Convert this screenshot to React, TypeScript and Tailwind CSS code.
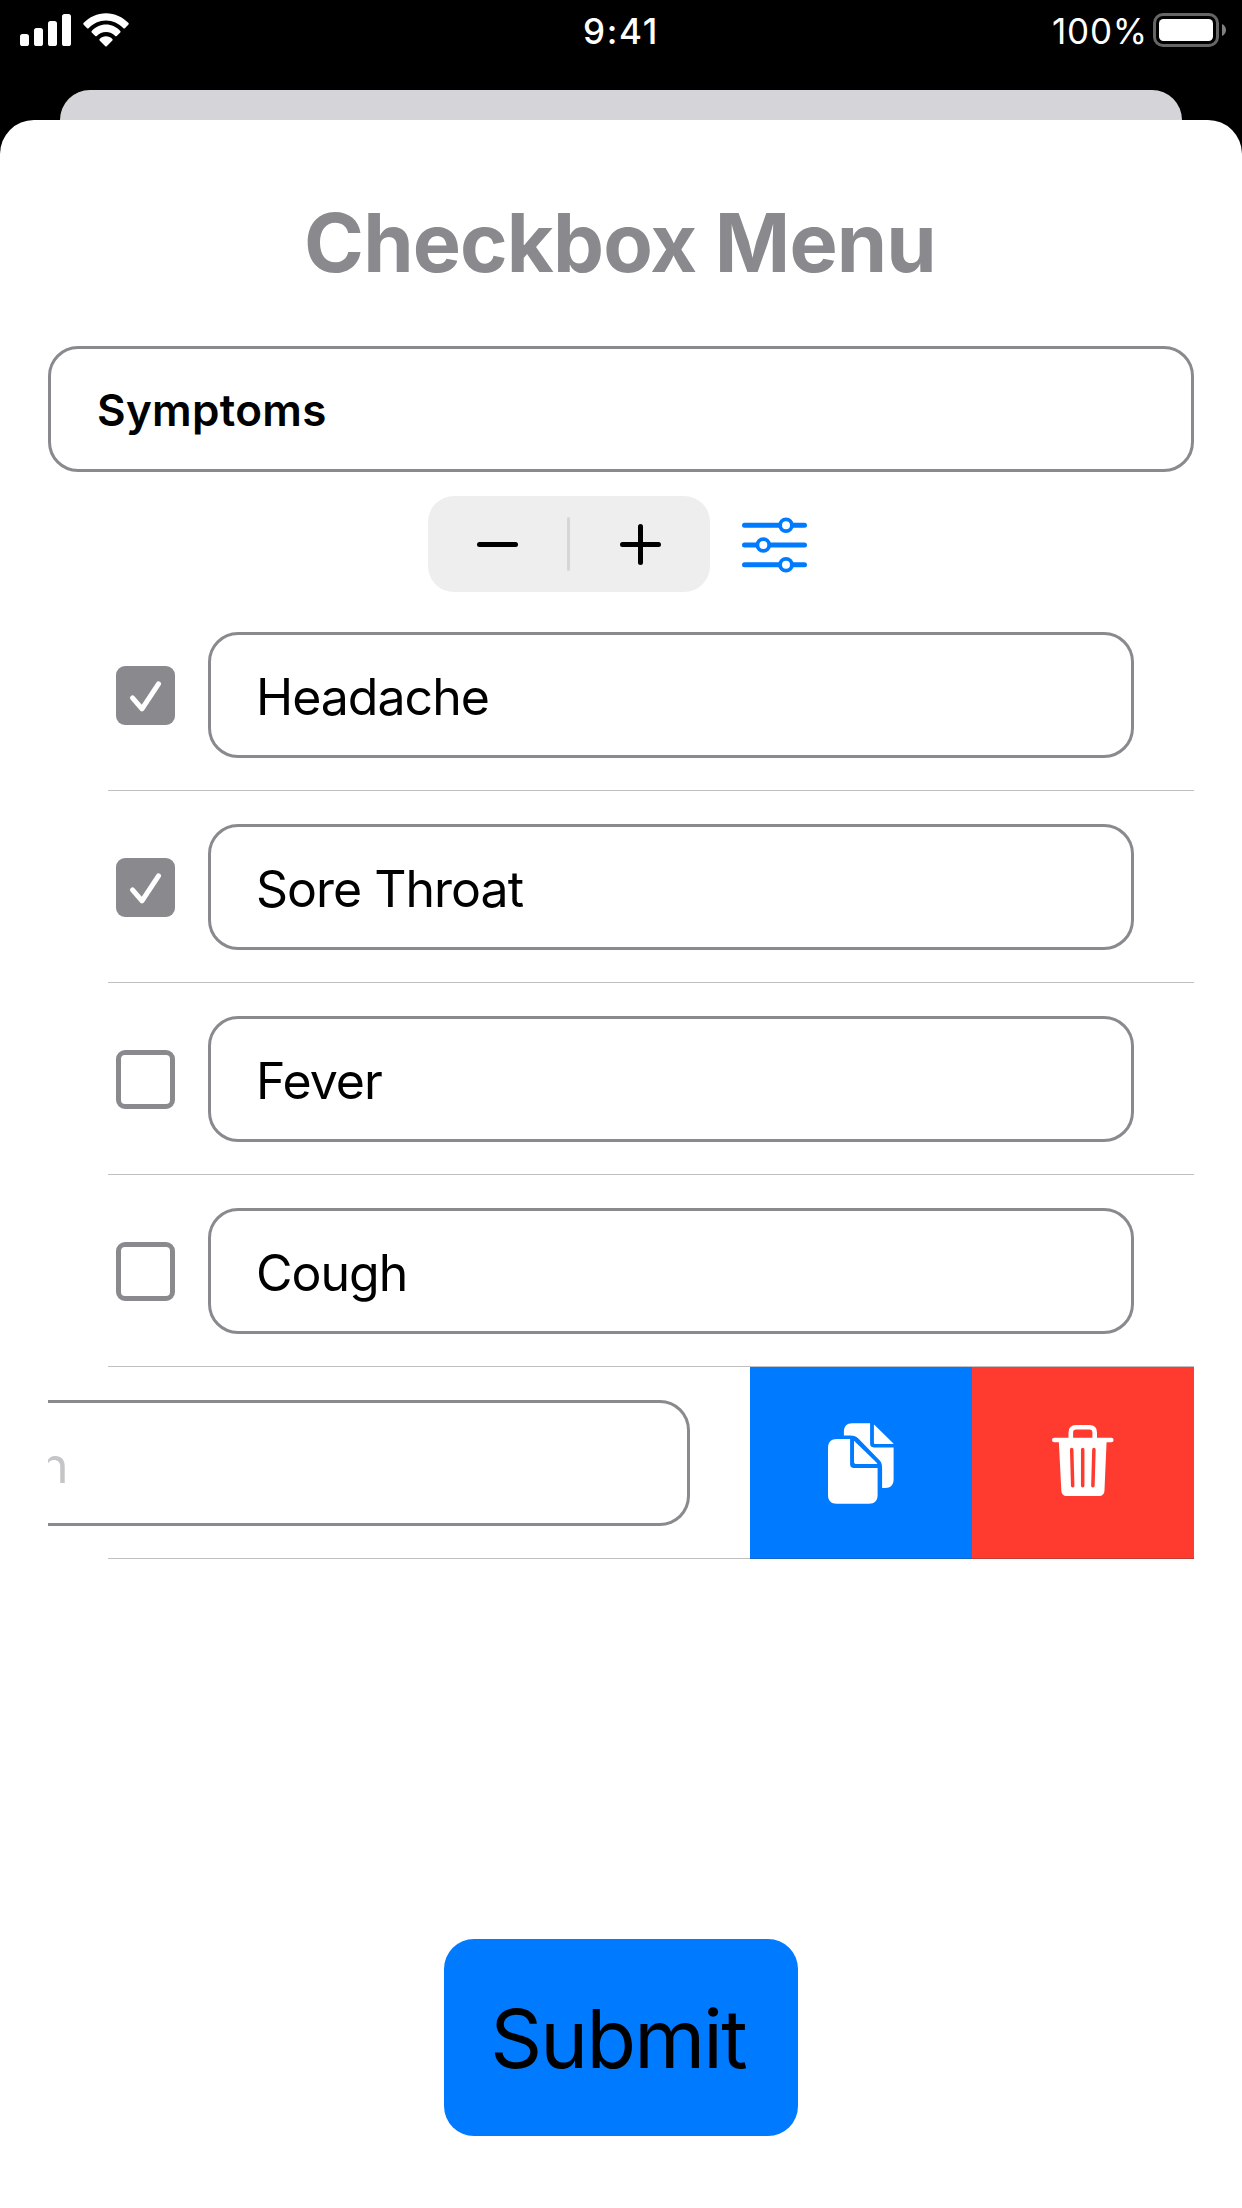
import type { ReactNode } from 'react';

function SignalIcon() {
  return (
    <svg width="51" height="32" viewBox="0 0 51 32" fill="#fff">
      <rect x="0" y="20" width="9" height="12" rx="2.6" />
      <rect x="14" y="14" width="9" height="18" rx="2.6" />
      <rect x="28" y="7" width="9" height="25" rx="2.6" />
      <rect x="42" y="0" width="9" height="32" rx="2.6" />
    </svg>
  );
}

function WifiIcon() {
  return (
    <svg width="46" height="34" viewBox="0 0 46 34" fill="#fff">
      <path d="M.5 10.1C6.300 4 14.300.2 23 .2s16.700 3.800 22.500 9.900c.4.5.4 1.100 0 1.500l-3.600 3.600c-.4.4-1 .4-1.500 0C35.800 10.500 29.700 7.500 23 7.500S10.200 10.500 5.600 15.200c-.5.4-1.100.4-1.500 0L.5 11.600c-.4-.4-.4-1 0-1.500Z" />
      <path d="M8.700 18C12.400 14 17.400 11.500 23 11.500S33.600 14 37.300 18c.4.4.4 1 0 1.400l-3.600 3.600c-.4.4-1 .4-1.500 0-2.400-2.500-5.600-4-9.200-4s-6.800 1.500-9.200 4c-.5.4-1.100.4-1.500 0l-3.600-3.600c-.4-.4-.4-1 0-1.400Z" />
      <path d="M16.600 26c1.700-1.800 4-2.800 6.400-2.800s4.700 1 6.400 2.800c.4.5.4 1 0 1.500l-5.700 5.700c-.4.4-1 .4-1.400 0l-5.700-5.700c-.4-.5-.4-1 0-1.500Z" />
    </svg>
  );
}

function BatteryIcon() {
  return (
    <svg width="74" height="34" viewBox="0 0 74 34">
      <rect x="1.500" y="1.500" width="63" height="31" rx="8.500" fill="none" stroke="#666" strokeWidth="3" />
      <rect x="6" y="6" width="54" height="22" rx="4.500" fill="#fff" />
      <path d="M69 11c2.500 1 4 3.400 4 6s-1.500 5-4 6Z" fill="#808080" />
    </svg>
  );
}

function SlidersIcon() {
  return (
    <svg className="relative top-[0.5px]" width="65" height="56" viewBox="0 0 65 56" fill="none" stroke="#007aff" strokeLinecap="round">
      <path d="M2.500 8.300h60M2.500 28h60M2.500 47.700h60" strokeWidth="5" />
      <g fill="#fff" strokeWidth="3.800">
        <circle cx="44" cy="8.300" r="5.900" />
        <circle cx="21.300" cy="28" r="5.900" />
        <circle cx="44" cy="47.700" r="5.900" />
      </g>
    </svg>
  );
}

function CopyIcon() {
  return (
    <svg width="66" height="81" viewBox="0 0 66 81" fill="#fff">
      <path d="M9 16h13.100v25.200c0 2.600 1.400 3.800 3.900 3.800h23.600v27c0 5.800-3 8.700-8.700 8.700H8.700C3 80.700 0 77.800 0 72V24.800C0 19 3 16 9 16Z" />
      <path d="M26 17.700 49 40.100c.4.400.3.800-.3.800H27.800c-1.200 0-1.800-.6-1.800-1.800Z" />
      <path d="M24.300.3h17.800v20.300c0 2.600 1.300 3.800 3.900 3.800h19.600v31.900c0 5.800-3 8.700-8.300 8.700h-3.200V45.500c0-4.600-.6-6.200-3.600-9.300L30.800 16c-2.700-2.800-4.600-3.500-8.500-3.500h-6.400V9c0-5.700 2.800-8.700 8.400-8.700Z" />
      <path d="m46.300 1.800 18.900 18.400c.4.400.3.900-.3.900H47.200c-.8 0-1.300-.5-1.300-1.300V2c0-.4.200-.4.400-.2Z" />
    </svg>
  );
}

function TrashIcon() {
  return (
    <svg width="62" height="72" viewBox="0 0 62 72" fill="none">
      <path d="M18.800 14V7.500c0-3.400 1.900-5.200 5.300-5.200h13.400c3.400 0 5.200 1.800 5.200 5.200V14" stroke="#fff" strokeWidth="4.600" />
      <path d="M2.300 15h57" stroke="#fff" strokeWidth="4.600" strokeLinecap="round" />
      <path d="M6.800 16h47.800l-2.100 49c-.2 4-2 6-6 6H15.300c-4 0-5.800-2-6-6Z" fill="#fff" />
      <path d="m19.700 24.600 1 36.200M30.700 24.600v36.200M41.900 24.600l-1 36.200" stroke="#ff3b30" strokeWidth="3.500" strokeLinecap="round" />
    </svg>
  );
}

function Checkbox({ checked }: { checked: boolean }) {
  return checked ? (
    <span className="flex size-[59px] items-center justify-center rounded-[9px] bg-[#8a8a8e]">
      <svg width="59" height="59" viewBox="0 0 59 59" fill="none" stroke="#fff" strokeWidth="5" strokeLinecap="round" strokeLinejoin="round">
        <path d="m16.500 31.800 9.500 11L42.500 17.800" />
      </svg>
    </span>
  ) : (
    <span className="size-[59px] rounded-[9px] border-5 border-[#8a8a8e]" />
  );
}

function Row({ children }: { children: ReactNode }) {
  return (
    <li className="relative flex h-48 items-center overflow-hidden">
      {children}
      <span className="absolute right-0 bottom-0 left-15 h-px bg-[rgba(60,60,67,0.32)]" />
    </li>
  );
}

const options = [
  { label: 'Headache', checked: true },
  { label: 'Sore Throat', checked: true },
  { label: 'Fever', checked: false },
  { label: 'Cough', checked: false },
];

export default function App() {
  return (
    <div className="flex h-[2208px] w-[1242px] flex-col bg-black font-['Inter',sans-serif] text-black">
      <header className="grid h-[90px] grid-cols-3 items-start text-[35px] leading-[62px] text-white">
        <div className="flex items-start gap-3 pt-[13px] pl-5">
          <span className="pt-px"><SignalIcon /></span>
          <WifiIcon />
        </div>
        <div className="text-center font-medium tracking-[1.7px]">9:41</div>
        <div className="flex justify-end gap-[5px] pr-[15px]">
          <span className="tracking-[0.8px]">100%</span>
          <span className="pt-[13px]"><BatteryIcon /></span>
        </div>
      </header>

      <div className="mx-15 h-[30px] rounded-t-[30px] bg-[#d5d4d9]" />

      <main className="flex flex-1 flex-col rounded-t-[34px] bg-white px-12 pb-[72px]">
        <h1 className="h-[226px] pt-5 pr-[2px] text-center text-[81px] leading-[207px] font-bold tracking-[-0.87px] text-[#8a8a8e]">
          Checkbox Menu
        </h1>

        <div className="flex h-[126px] items-center rounded-[30px] border-3 border-[#8a8a8e] px-[46px] pt-0.5 text-[44px] font-semibold tracking-[0.3px]">
          Symptoms
        </div>

        <div className="mt-6 flex h-24 items-center gap-8 pl-[380px]">
          <div className="flex h-24 w-[282px] items-center rounded-[26px] bg-[#eeeeee]">
            <div className="flex w-[139px] justify-center">
              <span className="h-[5px] w-[41px] rounded-full bg-black" />
            </div>
            <span className="h-[54px] w-[3px] rounded-full bg-[#d6d6d6]" />
            <div className="flex flex-1 justify-center pl-px">
              <svg width="41" height="41" viewBox="0 0 41 41" stroke="#000" strokeWidth="5" strokeLinecap="round">
                <path d="M2.500 20.500h36M20.500 2.500v36" />
              </svg>
            </div>
          </div>
          <SlidersIcon />
        </div>

        <ul className="mt-[7px]">
          {options.map((option) => (
            <Row key={option.label}>
              <div className="flex flex-1 items-center pr-15 pl-[68px]">
                <Checkbox checked={option.checked} />
                <div className="ml-[33px] flex h-[126px] flex-1 items-center rounded-[30px] border-3 border-[#8a8a8e] pt-[5px] pl-[45px] text-[50px] tracking-[-1px]">
                  {option.label}
                </div>
              </div>
            </Row>
          ))}
          <Row>
            <div className="flex h-[126px] w-[642px] shrink-0 items-center rounded-r-[30px] border-3 border-l-0 border-[#8a8a8e] pt-[5px] text-[50px] text-[#c5c5c7]">
              <span className="-ml-[9px]">n</span>
            </div>
            <div className="ml-15 flex h-full flex-1">
              <button className="flex w-[222px] items-center justify-center bg-[#007aff] pt-px">
                <CopyIcon />
              </button>
              <button className="flex w-[222px] items-center justify-center bg-[#ff3b30] pb-[5px]">
                <TrashIcon />
              </button>
            </div>
          </Row>
        </ul>

        <button className="mt-auto h-[197px] w-[354px] self-center rounded-[30px] bg-[#007aff] pt-[3px] pr-[6px] text-[81px] leading-none tracking-[-1.8px]">
          Submit
        </button>
      </main>
    </div>
  );
}
